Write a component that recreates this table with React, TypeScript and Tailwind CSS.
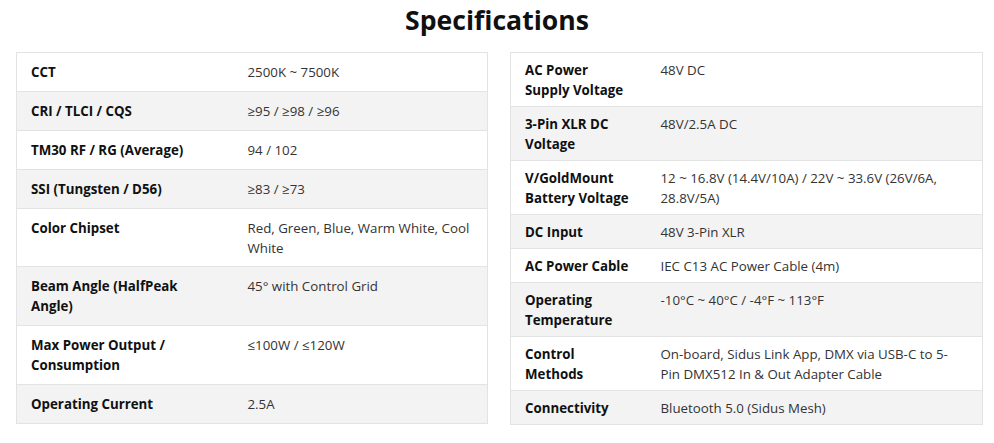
const left: [string, string][] = [
  ['CCT', '2500K ~ 7500K'],
  ['CRI / TLCI / CQS', '≥95 / ≥98 / ≥96'],
  ['TM30 RF / RG (Average)', '94 / 102'],
  ['SSI (Tungsten / D56)', '≥83 / ≥73'],
  ['Color Chipset', 'Red, Green, Blue, Warm White, Cool White'],
  ['Beam Angle (HalfPeak Angle)', '45° with Control Grid'],
  ['Max Power Output / Consumption', '≤100W / ≤120W'],
  ['Operating Current', '2.5A'],
];

const right: [string, string][] = [
  ['AC Power Supply Voltage', '48V DC'],
  ['3-Pin XLR DC Voltage', '48V/2.5A DC'],
  ['V/GoldMount Battery Voltage', '12 ~ 16.8V (14.4V/10A) / 22V ~ 33.6V (26V/6A, 28.8V/5A)'],
  ['DC Input', '48V 3-Pin XLR'],
  ['AC Power Cable', 'IEC C13 AC Power Cable (4m)'],
  ['Operating Temperature', '-10°C ~ 40°C / -4°F ~ 113°F'],
  ['Control Methods', 'On-board, Sidus Link App, DMX via USB-C to 5-Pin DMX512 In & Out Adapter Cable'],
  ['Connectivity', 'Bluetooth 5.0 (Sidus Mesh)'],
];

function SpecTable({
  rows,
  labelWidth,
  padY,
  valuePadRight = 'pr-[14px]',
}: {
  rows: [string, string][];
  labelWidth: string;
  padY: string;
  valuePadRight?: string;
}) {
  return (
    <table className="w-full border-collapse border border-[#e3e3e3] table-fixed">
      <colgroup>
        <col className={labelWidth} />
        <col />
      </colgroup>
      <tbody>
        {rows.map(([k, v], i) => (
          <tr key={k} className={i % 2 === 1 ? 'bg-[#f3f3f3]' : 'bg-white'}>
            <td className={`border-t border-[#e3e3e3] px-[14px] ${padY} align-top font-bold text-[#0f1111]`}>{k}</td>
            <td className={`border-t border-[#e3e3e3] pl-[14px] ${valuePadRight} ${padY} align-top text-[#333333]`}>{v}</td>
          </tr>
        ))}
      </tbody>
    </table>
  );
}

export default function App() {
  return (
    <div className="w-[994px] h-[443px] bg-white text-[13.3px] leading-[20px]" style={{ fontFamily: '"Open Sans", Arial, sans-serif' }}>
      <h2 className="text-center text-[26.6px] leading-[40px] font-bold text-[#0f1111]">Specifications</h2>
      <div className="flex items-start gap-[22px] pl-[16px] pt-[12px]">
        <div className="w-[472px] shrink-0">
          <SpecTable rows={left} labelWidth="w-[217px]" padY="pt-[9px] pb-[8.9px]" />
        </div>
        <div className="w-[473px] shrink-0">
          <SpecTable rows={right} labelWidth="w-[136px]" padY="pt-[7px] pb-[6px]" valuePadRight="pr-[20px]" />
        </div>
      </div>
    </div>
  );
}
